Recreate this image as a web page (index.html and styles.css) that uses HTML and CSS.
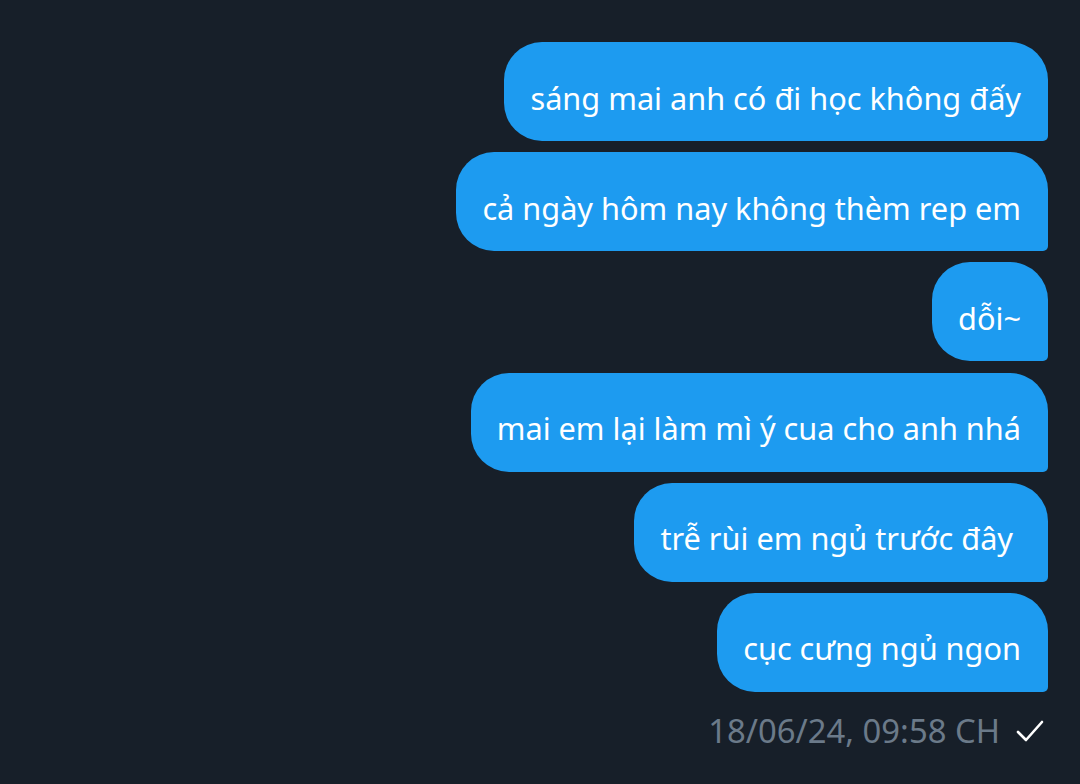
FILE: index.html
```html
<!DOCTYPE html>
<html lang="vi">
<head>
<meta charset="utf-8">
<link rel="stylesheet" href="styles.css">
</head>
<body>
<div class="chat">
  <div class="bubble">sáng mai anh có đi học không đấy</div>
  <div class="bubble">cả ngày hôm nay không thèm rep em</div>
  <div class="bubble">dỗi~</div>
  <div class="bubble">mai em lại làm mì ý cua cho anh nhá</div>
  <div class="bubble">trễ rùi em ngủ trước đây&nbsp;</div>
  <div class="bubble">cục cưng ngủ ngon</div>
  <div class="meta">
    <span class="time">18/06/24, 09:58 CH</span>
    <svg class="check" width="28" height="24" viewBox="0 0 28 24"><path d="M2 13 L10 21 L26 3" fill="none" stroke="#fff" stroke-width="2.6" stroke-linecap="round" stroke-linejoin="round"/></svg>
  </div>
</div>
</body>
</html>
```

FILE: styles.css
```css
html, body {
  margin: 0;
  padding: 0;
  background: #171f29;
  width: 1080px;
  height: 784px;
  overflow: hidden;
}
.chat {
  display: flex;
  flex-direction: column;
  align-items: flex-end;
  gap: 11.2px;
  padding: 42px 32px 0 0;
  font-family: "Noto Sans", "Liberation Sans", sans-serif;
}
.bubble {
  background: #1d9bf0;
  color: #fff;
  font-size: 30.7px;
  height: 99px;
  box-sizing: border-box;
  display: flex;
  align-items: center;
  padding: 12px 27px 0 26px;
  border-radius: 38px 38px 5px 38px;
  white-space: pre;
}
.meta {
  display: flex;
  align-items: center;
  gap: 16px;
  margin-top: 5px;
  padding-right: 4px;
}
.time {
  color: #6b7a89;
  font-size: 32.8px;
}
.check {
  display: block;
}
```
